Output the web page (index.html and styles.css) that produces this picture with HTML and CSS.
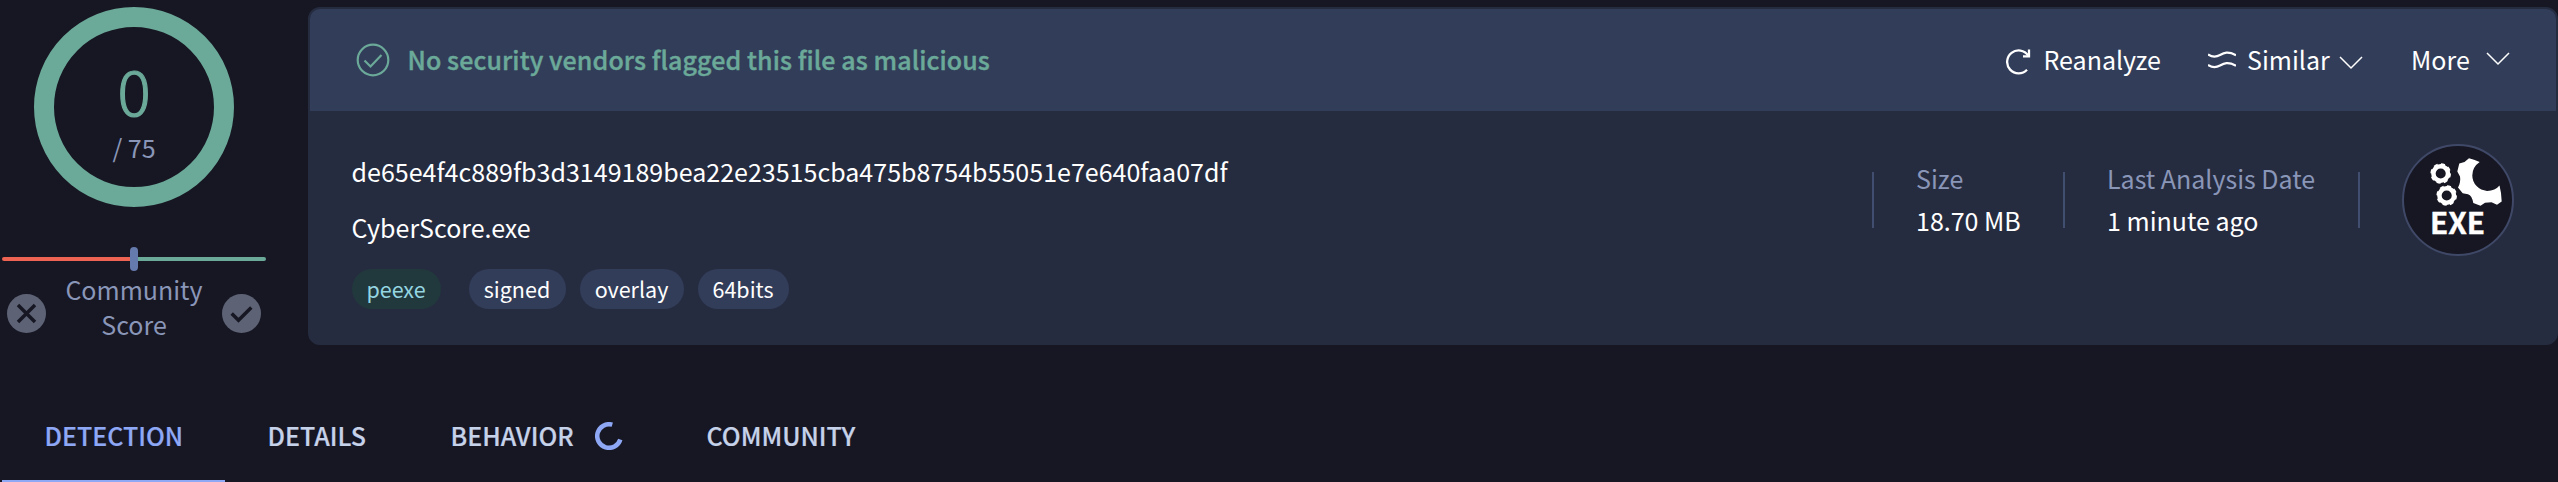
FILE: index.html
```
<!DOCTYPE html>
<html lang="en">
<head>
<meta charset="utf-8">
<title>File report</title>
<link rel="stylesheet" href="styles.css">
</head>
<body>
<div class="summary">
  <aside class="score">
    <div class="ring"><span class="ring-value">0</span><span class="ring-total">/ 75</span></div>
    <div class="meter"><i class="meter-bad"></i><i class="meter-good"></i><i class="meter-thumb"></i></div>
    <div class="community">
      <svg class="vote" viewBox="0 0 39 39"><circle cx="19.5" cy="19.5" r="19.5"/><path d="M11 11l17 17M28 11L11 28"/></svg>
      <span class="community-label">Community<br>Score</span>
      <svg class="vote" viewBox="0 0 39 39"><circle cx="19.5" cy="19.5" r="19.5"/><path d="M9.7 19.5l6.8 6.8 12.800-12.800"/></svg>
    </div>
  </aside>
  <section class="card">
    <header class="card-head">
      <svg class="ok" viewBox="0 0 34 34"><circle cx="17" cy="17" r="15.300"/><path d="M8.500 17.500l6 6L25.500 12"/></svg>
      <span class="verdict">No security vendors flagged this file as malicious</span>
      <span class="action reanalyze"><svg class="ic-reload" viewBox="0 0 25 26"><path d="M21 20.800A11.500 11.500 0 1 1 22.200 6.500"/><path d="M17 7.300H23V.5"/></svg><span>Reanalyze</span></span>
      <span class="action similar"><svg class="ic-similar" viewBox="0 0 28 18"><path d="M0 3.500C4 6 8 6.200 12 4S20 0 28 4.200M0 14C4 16.500 8 16.700 12 14.500S20 10.500 28 14.700"/></svg><span>Similar</span><svg class="chev chev-low" viewBox="0 0 24 14"><path d="M1 1l11 11L23 1"/></svg></span>
      <span class="action more"><span>More</span><svg class="chev chev-high" viewBox="0 0 24 14"><path d="M1 1l11 11L23 1"/></svg></span>
    </header>
    <div class="card-body">
      <div class="file">
        <div class="hash">de65e4f4c889fb3d3149189bea22e23515cba475b8754b55051e7e640faa07df</div>
        <div class="name">CyberScore.exe</div>
        <div class="tags"><span class="tag tag-type">peexe</span><span class="tag tag-signed">signed</span><span class="tag tag-overlay">overlay</span><span class="tag tag-bits">64bits</span></div>
      </div>
      <div class="fact fact-size"><span class="label">Size</span><span class="value">18.70 MB</span></div>
      <div class="fact fact-date"><span class="label">Last Analysis Date</span><span class="value">1 minute ago</span></div>
      <div class="fact fact-icon">
        <svg class="exe" viewBox="0 0 112 112">
          <circle class="exe-disc" cx="56" cy="56" r="55"/>
          <g class="gear"><circle cx="38.700" cy="29.500" r="7.300"/><circle class="teeth" cx="38.700" cy="29.500" r="9.300"/></g>
          <g class="gear"><circle cx="44.700" cy="51.500" r="7.300"/><circle class="teeth" cx="44.700" cy="51.500" r="9.300"/></g>
          <path class="wrench" d="M67 14.200L72 15.800 77.700 18Q70.300 23 70.300 31.500A15.500 15.500 0 0 0 85 46.900Q93 47 97.500 41.500L99 49 99.700 57.500 95 60.700 89.500 58.300 83 58.800 78.500 61.700 71.300 59Q70 51.500 66 50.200L60.700 49.300 56 43.500Q59 38 58 32.500L55.300 27.500 57.300 19.500 62.500 18Z"/>
          <text x="28" y="89.500" class="exe-text" textLength="55" lengthAdjust="spacingAndGlyphs">EXE</text>
        </svg>
      </div>
    </div>
  </section>
</div>
<nav class="tabs">
  <span class="tab tab-active">DETECTION</span>
  <span class="tab tab-details">DETAILS</span>
  <span class="tab tab-behavior">BEHAVIOR<svg class="spin" viewBox="0 0 28 28"><path d="M17.300 2.700A11.800 11.800 0 1 0 25.300 17.500"/></svg></span>
  <span class="tab tab-community">COMMUNITY</span>
</nav>
</body>
</html>
```
FILE: styles.css
```
* { box-sizing: border-box; }
body { margin: 0; width: 2558px; height: 482px; overflow: hidden; background: #171723; color: #fff; font: 25px/36px "Noto Sans CJK SC", "Noto Sans", sans-serif; white-space: nowrap; }
svg { display: block; flex: none; fill: none; }
.summary { display: flex; height: 399px; padding-top: 7px; }
.score { width: 308px; flex: none; }
.ring { width: 200px; height: 200px; margin-left: 34px; border: 20px solid #6ba999; border-radius: 50%; display: flex; flex-direction: column; align-items: center; padding-top: 17px; }
.ring-value { font-size: 62px; line-height: 90px; color: #6ba999; font-weight: 300; -webkit-text-stroke: 1.2px #6ba999; }
.ring-total { line-height: 36px; color: #8a96b8; margin-top: -5px; }
.meter { position: relative; display: flex; width: 264px; height: 4px; margin: 50px 0 0 2px; }
.meter-bad, .meter-good { flex: 1; border-radius: 2px; background: #ef6353; }
.meter-good { background: #6ba999; }
.meter-thumb { position: absolute; left: 128px; top: -10px; width: 8px; height: 24px; border-radius: 4px; background: #667bad; }
.community { display: flex; width: 254px; margin: 11px 0 0 7px; justify-content: space-between; }
.vote { width: 39px; height: 39px; margin-top: 22px; }
.vote circle { fill: #5d6275; }
.vote path { stroke: #171723; stroke-width: 3.5; }
.community-label { text-align: center; line-height: 35px; color: #8a96b8; }
.card { width: 2250px; height: 338px; border: 2px solid #262c40; border-radius: 12px; background: #262c40; overflow: hidden; }
.card-head { display: flex; align-items: center; height: 102px; padding-left: 46px; background: #323d59; }
.ok { width: 34px; height: 34px; stroke: #6ba999; stroke-width: 2.200; }
.verdict { margin: 0 0 2px 17.500px; color: #6ba999; font-weight: 500; letter-spacing: .09px; -webkit-text-stroke: .4px #6ba999; flex: 1; }
.action { display: flex; align-items: center; stroke: #fff; flex: none; }
.action span { stroke: none; margin-bottom: 2px; }
.reanalyze { width: 202.500px; }
.ic-reload { width: 25px; height: 26px; stroke-width: 2.300; margin-right: 13px; margin-top: 3px; }
.similar { width: 203px; }
.ic-similar { width: 28px; height: 18px; stroke-width: 2.200; margin-right: 11px; }
.chev { width: 24px; height: 14px; stroke-width: 1.500; }
.chev-low { margin: 6px 0 0 9px; }
.chev-high { margin: 0 0 2px 16px; }
.more { width: 145px; }
.card-body { display: flex; align-items: flex-start; padding: 31px 42px 0 41.500px; }
.file { flex: 1; }
.hash { height: 56px; line-height: 58px; letter-spacing: .02px; }
.name { height: 56px; line-height: 58px; }
.tags { display: flex; font-size: 21.500px; margin-top: 15px; }
.tag { height: 40px; line-height: 39px; border-radius: 20px; background: #323d59; text-align: center; margin-right: 14px; }
.tag-type { width: 89px; background: #21393c; color: #95d5e2; margin-right: 28px; }
.tag-signed { width: 97px; }
.tag-overlay { width: 104px; }
.tag-bits { width: 91px; }
.fact { display: flex; flex-direction: column; border-left: 2px solid #414e70; height: 56px; margin-top: 30px; padding-left: 42px; justify-content: center; }
.fact .label, .fact .value { line-height: 42px; margin-top: -1px; margin-bottom: 1px; }
.label { color: #8a96b8; }
.fact-size { width: 191px; }
.fact-date { width: 295px; }
.exe { width: 112px; height: 112px; }
.exe-disc { fill: #171723; stroke: #3f4967; stroke-width: 2; }
.gear { stroke: #fff; stroke-width: 4.500; }
.teeth { stroke-width: 2; stroke-dasharray: 4 3.300; }
.wrench { fill: #fff; }
.exe-text { font: 700 29px "Noto Sans CJK SC", sans-serif; fill: #fff; stroke: #fff; stroke-width: .4px; }
.tabs { display: flex; height: 83px; margin-left: 2px; font-weight: 500; color: #c6d2e9; }
.tab { display: flex; align-items: center; padding: 0 0 11px 42.500px; height: 83px; -webkit-text-stroke: .2px currentColor; }
.tab-active { width: 223px; color: #8ea8f6; border-bottom: 2px solid #8ea8f6; padding-bottom: 9px; }
.tab-details { width: 183px; }
.tab-behavior { width: 256px; }
.spin { width: 28px; height: 28px; stroke: #8ea8f6; stroke-width: 4.500; margin: 1px 0 0 21px; }
```
